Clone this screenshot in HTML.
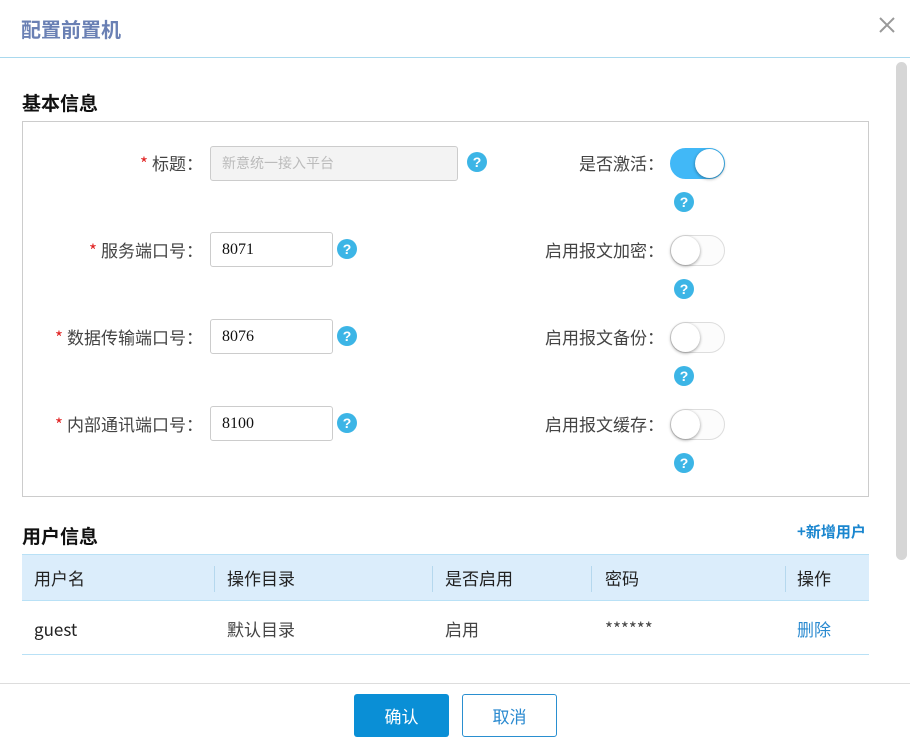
<!DOCTYPE html>
<html><head><meta charset="utf-8"><style>
*{margin:0;padding:0;box-sizing:border-box}
body{width:910px;height:746px;background:#fff;position:relative;overflow:hidden;font-family:"Noto Sans CJK SC","Liberation Sans",sans-serif;color:#333}
.a{position:absolute;line-height:20px}
.title{left:21px;top:17px;font-size:20px;line-height:24px;font-weight:bold;color:#6a80b4}
.hl{left:0;top:57px;width:910px;height:1px;background:#a9d9ee}
.h2{font-size:19px;line-height:24px;font-weight:bold;color:#111}
.box{left:22px;top:121px;width:847px;height:376px;border:1px solid #ccc}
.lbl{font-size:17px;color:#444;text-align:right;width:200px}
.lbl b{color:#e02020;font-weight:normal;margin-right:4px}
.inp{height:35px;border:1px solid #ccc;border-radius:3px;font-size:16px;padding-left:11px;line-height:33px;color:#111;background:#fff;font-family:"Liberation Serif","Noto Sans CJK SC",serif}
.q{width:20px;height:20px;border-radius:50%;background:#3cb5e6;color:#fff;font-size:14px;font-weight:bold;text-align:center;line-height:20px;font-family:"Liberation Sans",sans-serif}
.tg{width:55px;height:31px;border-radius:16px;border:1px solid #ddd;background:#fcfcfc}
.tg i{position:absolute;top:0;left:0;width:29px;height:29px;border-radius:50%;background:#fff;box-shadow:0 1px 3px rgba(0,0,0,.4)}
.tg.on{background:#41b8f7;border-color:#41b8f7}
.tg.on i{left:24px}
.th{left:22px;top:554px;width:847px;height:47px;background:#dbedfb;border-top:1px solid #b9e1f6;border-bottom:1px solid #b9e1f6}
.c{font-size:17px;color:#222}
.sep{width:1px;height:26px;background:#b5d8ee;top:566px}
</style></head><body>
<div class="a title">配置前置机</div>
<svg class="a" style="left:879px;top:17px" width="16" height="16" viewBox="0 0 16 16"><path d="M1 1L15 15M15 1L1 15" stroke="#999" stroke-width="2"/></svg>
<div class="a hl"></div>
<div class="a" style="left:896px;top:62px;width:11px;height:498px;border-radius:6px;background:#d6d6d6"></div>

<div class="a h2" style="left:22px;top:91px">基本信息</div>
<div class="a box"></div>

<div class="a lbl" style="left:3px;top:153px"><b>*</b>标题：</div>
<div class="a inp" style="left:210px;top:146px;width:248px;background:#f3f3f3;color:#bbb;font-size:14px;font-family:'Noto Sans CJK SC',sans-serif">新意统一接入平台</div>
<div class="a q" style="left:467px;top:152px">?</div>

<div class="a lbl" style="left:3px;top:240px"><b>*</b>服务端口号：</div>
<div class="a inp" style="left:210px;top:232px;width:123px">8071</div>
<div class="a q" style="left:337px;top:239px">?</div>

<div class="a lbl" style="left:3px;top:327px"><b>*</b>数据传输端口号：</div>
<div class="a inp" style="left:210px;top:319px;width:123px">8076</div>
<div class="a q" style="left:337px;top:326px">?</div>

<div class="a lbl" style="left:3px;top:414px"><b>*</b>内部通讯端口号：</div>
<div class="a inp" style="left:210px;top:406px;width:123px">8100</div>
<div class="a q" style="left:337px;top:413px">?</div>

<div class="a lbl" style="left:464px;top:153px">是否激活：</div>
<div class="a tg on" style="left:670px;top:148px"><i></i></div>
<div class="a q" style="left:674px;top:192px">?</div>

<div class="a lbl" style="left:464px;top:240px">启用报文加密：</div>
<div class="a tg" style="left:670px;top:235px"><i></i></div>
<div class="a q" style="left:674px;top:279px">?</div>

<div class="a lbl" style="left:464px;top:327px">启用报文备份：</div>
<div class="a tg" style="left:670px;top:322px"><i></i></div>
<div class="a q" style="left:674px;top:366px">?</div>

<div class="a lbl" style="left:464px;top:414px">启用报文缓存：</div>
<div class="a tg" style="left:670px;top:409px"><i></i></div>
<div class="a q" style="left:674px;top:453px">?</div>

<div class="a h2" style="left:22px;top:524px">用户信息</div>
<div class="a" style="left:797px;top:522px;font-size:15px;font-weight:bold;color:#1a86cf">+新增用户</div>

<div class="a th"></div>
<div class="a sep" style="left:214px"></div>
<div class="a sep" style="left:432px"></div>
<div class="a sep" style="left:591px"></div>
<div class="a sep" style="left:785px"></div>
<div class="a c" style="left:34px;top:568px">用户名</div>
<div class="a c" style="left:227px;top:568px">操作目录</div>
<div class="a c" style="left:445px;top:568px">是否启用</div>
<div class="a c" style="left:605px;top:568px">密码</div>
<div class="a c" style="left:797px;top:568px">操作</div>

<div class="a c" style="left:34px;top:619px">guest</div>
<div class="a c" style="left:227px;top:619px;color:#444">默认目录</div>
<div class="a c" style="left:445px;top:619px;color:#444">启用</div>
<div class="a c" style="left:605px;top:618px;color:#444">******</div>
<div class="a c" style="left:797px;top:619px;color:#2a8ad0">删除</div>
<div class="a" style="left:22px;top:654px;width:847px;height:1px;background:#b9e1f6"></div>

<div class="a" style="left:0;top:683px;width:910px;height:1px;background:#ddd"></div>
<div class="a" style="left:354px;top:694px;width:95px;height:43px;border-radius:3px;background:#0a8fd6;color:#fff;font-size:17px;text-align:center;line-height:43px">确认</div>
<div class="a" style="left:462px;top:694px;width:95px;height:43px;border-radius:3px;border:1px solid #2a8fd0;color:#2a8ad0;font-size:17px;text-align:center;line-height:41px">取消</div>
</body></html>
